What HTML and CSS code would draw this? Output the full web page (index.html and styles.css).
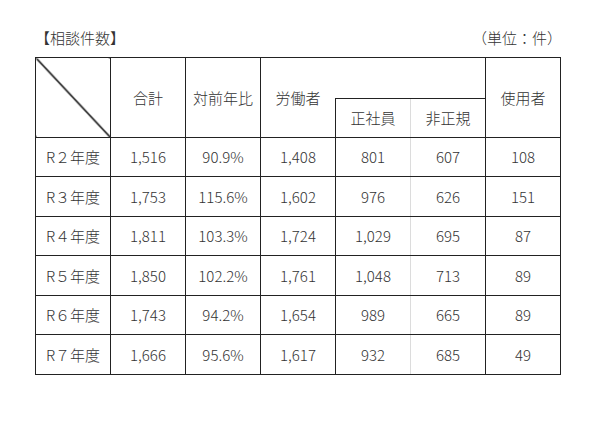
FILE: index.html
```html
<!DOCTYPE html>
<html lang="ja">
<head>
<meta charset="utf-8">
<link rel="stylesheet" href="styles.css">
</head>
<body>
<div class="page">
  <div class="caption">
    <span>【相談件数】</span>
    <span>（単位：件）</span>
  </div>
  <table class="stats">
    <colgroup>
      <col class="c"><col class="c"><col class="c"><col class="c"><col class="c"><col class="c"><col class="c">
    </colgroup>
    <tr class="h1">
      <th rowspan="2" class="diag"></th>
      <th rowspan="2">合計</th>
      <th rowspan="2">対前年比</th>
      <th rowspan="2" class="worker">労働者</th>
      <th colspan="2" class="blank"></th>
      <th rowspan="2">使用者</th>
    </tr>
    <tr class="h2">
      <th class="sub reg">正社員</th>
      <th class="sub non">非正規</th>
    </tr>
    <tr class="r39"><td>R２年度</td><td>1,516</td><td>90.9%</td><td>1,408</td><td class="reg">801</td><td class="non">607</td><td>108</td></tr>
    <tr class="r40"><td>R３年度</td><td>1,753</td><td>115.6%</td><td>1,602</td><td class="reg">976</td><td class="non">626</td><td>151</td></tr>
    <tr class="r39"><td>R４年度</td><td>1,811</td><td>103.3%</td><td>1,724</td><td class="reg">1,029</td><td class="non">695</td><td>87</td></tr>
    <tr class="r40"><td>R５年度</td><td>1,850</td><td>102.2%</td><td>1,761</td><td class="reg">1,048</td><td class="non">713</td><td>89</td></tr>
    <tr class="r39"><td>R６年度</td><td>1,743</td><td>94.2%</td><td>1,654</td><td class="reg">989</td><td class="non">665</td><td>89</td></tr>
    <tr class="r40"><td>R７年度</td><td>1,666</td><td>95.6%</td><td>1,617</td><td class="reg">932</td><td class="non">685</td><td>49</td></tr>
  </table>
</div>
</body>
</html>
```

FILE: styles.css
```css
html, body {
  margin: 0;
  padding: 0;
  background: #ffffff;
}

body {
  font-family: "Noto Sans CJK JP", "Noto Sans", sans-serif;
  color: #333333;
  font-size: 15px;
  font-weight: 300;
}

.page {
  width: 600px;
  height: 424px;
  padding: 28px 0 0 35px;
  box-sizing: border-box;
}

.caption {
  width: 527px;
  display: flex;
  justify-content: space-between;
  line-height: 20px;
  height: 20px;
  margin-bottom: 9px;
}

.stats {
  border-collapse: collapse;
  table-layout: fixed;
  width: 525px;
}

.stats col.c {
  width: 75px;
}

.stats th,
.stats td {
  border: 1px solid #222222;
  padding: 0;
  text-align: center;
  vertical-align: middle;
  font-weight: 300;
  line-height: 18px;
}

.stats tr.h1 { height: 41px; }
.stats tr.h2 { height: 39px; }
.stats tr.r39 { height: 39px; }
.stats tr.r40 { height: 40px; }

.stats .blank {
  border-left-style: hidden;
}

.stats .reg {
  border-right-color: #dcdcdc;
}

.stats .non {
  border-left-color: #dcdcdc;
}

.stats .diag {
  background: linear-gradient(to top right, transparent calc(50% - 1.1px), #111 calc(50% - 0.45px), #111 calc(50% + 0.45px), transparent calc(50% + 1.1px));
}
```
